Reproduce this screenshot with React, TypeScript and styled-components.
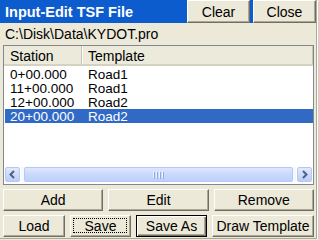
import React, { useState } from "react";
import styled, { createGlobalStyle, css } from "styled-components";

const GlobalStyle = createGlobalStyle`
  html, body {
    margin: 0;
    padding: 0;
    background: #ece9d8;
  }
  body {
    font-family: "Liberation Sans", Arial, sans-serif;
  }
`;

const Window = styled.div`
  width: 316px;
  height: 238px;
  display: flex;
  flex-direction: column;
  background: #ece9d8;
  border-right: 1px solid #aca899;
  border-bottom: 1px solid #aca899;
  box-shadow: 1px 1px 0 #ffffff, 2px 2px 0 #d4d0c8;
`;

const TitleBar = styled.div`
  height: 23px;
  display: flex;
  align-items: stretch;
  gap: 3px;
  background: #0c5ccd;
`;

const Title = styled.div`
  flex: 1;
  display: flex;
  align-items: center;
  padding-left: 5px;
  color: #ffffff;
  font-weight: bold;
  font-size: 14.5px;
`;

const Btn = styled.button<{ $default?: boolean; $focus?: boolean }>`
  box-sizing: border-box;
  margin: 0;
  padding: 0;
  height: 22px;
  background: #ece9d8;
  font-family: "Liberation Sans", Arial, sans-serif;
  font-size: 14px;
  color: #000;
  border: 1px solid;
  border-color: #ffffff #716f64 #716f64 #ffffff;
  box-shadow: inset -1px -1px 0 #aca899;
  position: relative;
  ${(p) =>
    p.$default &&
    css`
      border: 1px solid #000;
      box-shadow: inset 1px 1px 0 #fff, inset -1px -1px 0 #716f64, inset -2px -2px 0 #aca899;
    `}
  ${(p) =>
    p.$focus &&
    css`
      &::after {
        content: "";
        position: absolute;
        inset: 2px 3px 3px 2px;
        border: 1px dotted #000;
      }
    `}
`;

const TitleBtn = styled(Btn)`
  width: 63px;
  height: 23px;
`;

const PathRow = styled.div`
  height: 21px;
  display: flex;
  align-items: center;
  padding-left: 5px;
  font-size: 14px;
  color: #000;
`;

const ListBox = styled.div`
  margin: 1px 2px 0 3px;
  height: 140px;
  box-sizing: border-box;
  border: 1px solid #828790;
  background: #fff;
  display: flex;
  flex-direction: column;
  overflow: hidden;
`;

const Header = styled.div`
  height: 20px;
  box-sizing: border-box;
  display: grid;
  grid-template-columns: 78px 1fr;
  background: #ebeadb;
  border-bottom: 2px solid #d6d2c2;
`;

const HeaderCell = styled.div`
  display: flex;
  align-items: center;
  padding: 1px 0 0 6px;
  font-size: 14px;
  border-right: 1px solid #c7c5b2;
  box-shadow: 1px 0 0 #fff;
`;

const Rows = styled.div`
  flex: 1;
  padding-top: 1px;
`;

const Row = styled.div<{ $selected?: boolean }>`
  height: 14px;
  display: grid;
  grid-template-columns: 78px 1fr;
  font-size: 13.5px;
  line-height: 14px;
  margin-left: 1px;
  color: ${(p) => (p.$selected ? "#fff" : "#000")};
  background: ${(p) => (p.$selected ? "#316ac5" : "transparent")};
`;

const Cell = styled.div`
  padding: 1px 0 0 5px;
  height: 13px;
  line-height: 13px;
  white-space: nowrap;
`;

const ScrollBar = styled.div`
  height: 15px;
  margin: 0 1px 2px 1px;
  display: flex;
  align-items: stretch;
  gap: 1px;
`;

const Arrow = styled.div`
  width: 15px;
  box-sizing: border-box;
  border: 1px solid #b4c8f6;
  border-radius: 2px;
  background: linear-gradient(#e0e9fd, #bccdf9);
  display: flex;
  align-items: center;
  justify-content: center;
`;

const Track = styled.div`
  flex: 1;
  background: #f7f8fc;
  display: flex;
  padding: 0 3px;
`;

const Thumb = styled.div`
  flex: 1;
  box-sizing: border-box;
  border: 1px solid #b6c9f6;
  border-radius: 2px;
  background: linear-gradient(#dde6fd, #cad8fc 50%, #c0d0fa);
  display: flex;
  align-items: center;
  justify-content: center;
  gap: 1px;
`;

const Grip = styled.span`
  width: 1px;
  height: 7px;
  background: #eef3ff;
  box-shadow: 1px 1px 0 #8caae6;
  margin-right: 1px;
`;

const ButtonRow = styled.div<{ $cols: string }>`
  margin: 4px 2px 0 3px;
  display: grid;
  grid-template-columns: ${(p) => p.$cols};
  gap: 5px;
`;

const rows = [
  { station: "0+00.000", template: "Road1" },
  { station: "11+00.000", template: "Road1" },
  { station: "12+00.000", template: "Road2" },
  { station: "20+00.000", template: "Road2" },
];

function ArrowIcon({ dir }: { dir: "left" | "right" }) {
  const d = dir === "left" ? "M6 1 L2.5 4.5 L6 8" : "M3 1 L6.5 4.5 L3 8";
  return (
    <svg width="9" height="9" viewBox="0 0 9 9">
      <path d={d} stroke="#4d6185" strokeWidth="2" fill="none" />
    </svg>
  );
}

export default function App() {
  const [selected, setSelected] = useState(3);

  return (
    <>
      <GlobalStyle />
      <Window>
        <TitleBar>
          <Title>Input-Edit TSF File</Title>
          <TitleBtn>Clear</TitleBtn>
          <TitleBtn>Close</TitleBtn>
        </TitleBar>
        <PathRow>C:\Disk\Data\KYDOT.pro</PathRow>
        <ListBox>
          <Header>
            <HeaderCell>Station</HeaderCell>
            <HeaderCell>Template</HeaderCell>
          </Header>
          <Rows>
            {rows.map((r, i) => (
              <Row key={i} $selected={i === selected} onClick={() => setSelected(i)}>
                <Cell>{r.station}</Cell>
                <Cell>{r.template}</Cell>
              </Row>
            ))}
          </Rows>
          <ScrollBar>
            <Arrow>
              <ArrowIcon dir="left" />
            </Arrow>
            <Track>
              <Thumb>
                <Grip />
                <Grip />
                <Grip />
                <Grip />
              </Thumb>
            </Track>
            <Arrow>
              <ArrowIcon dir="right" />
            </Arrow>
          </ScrollBar>
        </ListBox>
        <ButtonRow $cols="1fr 1fr 1fr">
          <Btn>Add</Btn>
          <Btn>Edit</Btn>
          <Btn>Remove</Btn>
        </ButtonRow>
        <ButtonRow $cols="62px 61px 71px 1fr">
          <Btn>Load</Btn>
          <Btn $focus>Save</Btn>
          <Btn $default>Save As</Btn>
          <Btn>Draw Template</Btn>
        </ButtonRow>
      </Window>
    </>
  );
}
